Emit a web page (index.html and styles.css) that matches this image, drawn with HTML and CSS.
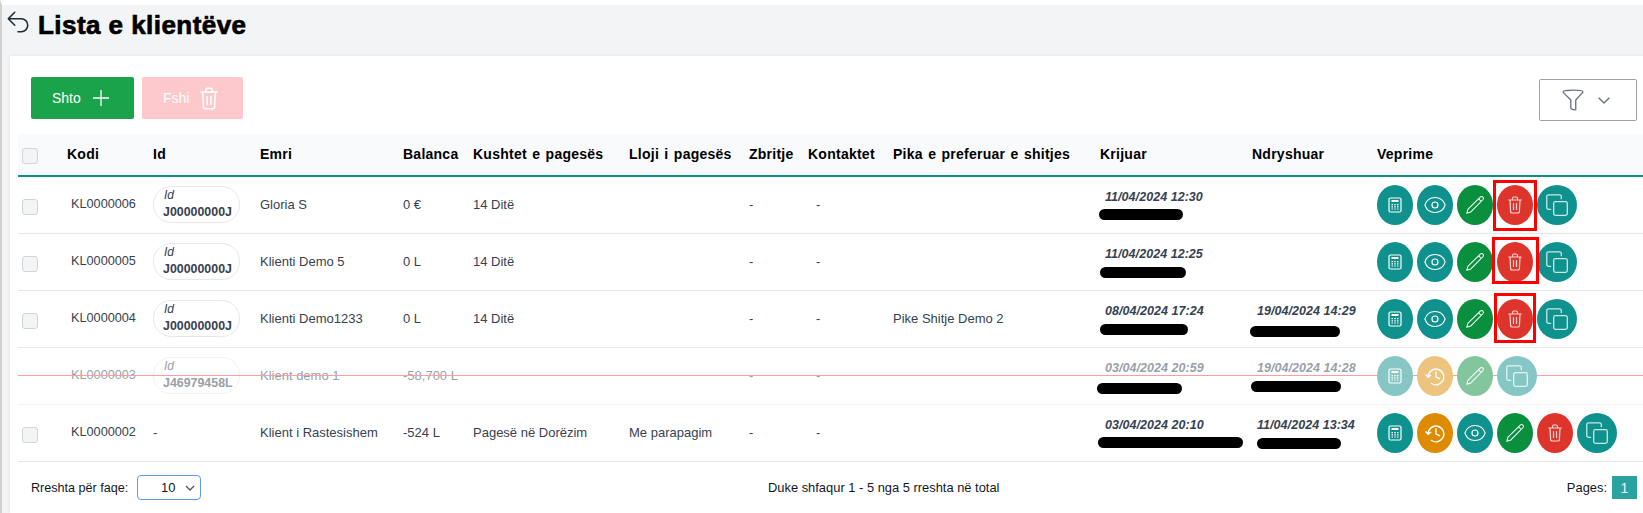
FILE: index.html
```html
<!DOCTYPE html>
<html lang="sq">
<head>
<meta charset="utf-8">
<title>Lista e klientëve</title>
<link rel="stylesheet" href="styles.css">
</head>
<body>
<svg class="defs" aria-hidden="true">
  <symbol id="i-calc" viewBox="0 0 14 16">
    <rect x="1" y="1" width="12" height="14" rx="1.5" fill="none" stroke="currentColor" stroke-width="1.2"/>
    <rect x="3.5" y="3" width="7" height="2" fill="currentColor"/>
    <path d="M3.5 7h1.5v1.2H3.5zM6.25 7h1.5v1.2h-1.5zM9 7h1.5v1.2H9zM3.5 9.2h1.5v1.2H3.5zM6.25 9.2h1.5v1.2h-1.5zM9 9.2h1.5v1.2H9zM3.5 11.4h1.5v1.2H3.5zM6.25 11.4h1.5v1.2h-1.5zM9 11.4h1.5v1.2H9z" fill="currentColor"/>
  </symbol>
  <symbol id="i-eye" viewBox="0 0 24 24">
    <path d="M2.036 12.322a1.012 1.012 0 0 1 0-.639C3.423 7.51 7.36 4.5 12 4.5c4.638 0 8.573 3.007 9.963 7.178.07.207.07.431 0 .639C20.577 16.49 16.64 19.5 12 19.5c-4.638 0-8.573-3.007-9.963-7.178Z" fill="none" stroke="currentColor" stroke-width="1.2"/>
    <circle cx="12" cy="12" r="3" fill="none" stroke="currentColor" stroke-width="1.2"/>
  </symbol>
  <symbol id="i-pencil" viewBox="0 0 24 24">
    <path d="M18 3.2a2 2 0 0 1 2.8 2.8L7.5 19.6 3 21l1.4-4.5Z M16 5.4l2.8 2.8" fill="none" stroke="currentColor" stroke-width="1.1" stroke-linejoin="round"/>
  </symbol>
  <symbol id="i-trash" viewBox="0 0 14 18">
    <path d="M.8 4h12.4M4.5 4V2.4A1.4 1.4 0 0 1 5.900 1h2.200a1.400 1.400 0 0 1 1.400 1.400V4M2 4l.6 11.600A1.500 1.500 0 0 0 4.100 17h5.800a1.500 1.500 0 0 0 1.500-1.400L12 4M5.500 7.500v6M8.500 7.500v6" fill="none" stroke="currentColor" stroke-width="1.200" stroke-linecap="round" stroke-linejoin="round"/>
  </symbol>
  <symbol id="i-copy" viewBox="0 0 22 22">
    <rect x="7.700" y="7.700" width="13.600" height="13.600" rx="1.800" fill="none" stroke="currentColor" stroke-width="1.300"/>
    <path d="M4.700 15.300H2.600A1.800 1.800 0 0 1 .8 13.500V2.600A1.800 1.800 0 0 1 2.600.8h10.900a1.800 1.800 0 0 1 1.800 1.800v2.100" fill="none" stroke="currentColor" stroke-width="1.300" stroke-linecap="round"/>
  </symbol>
  <symbol id="i-history" viewBox="0 0 24 24">
    <path d="M3.500 12.500a9 9 0 1 1 4 7.500M1 10l2.500 3 3-2.500M12.500 6.500v6l4 2" fill="none" stroke="currentColor" stroke-width="1.600" stroke-linecap="round" stroke-linejoin="round"/>
  </symbol>
</svg>

<header class="page-head">
  <svg class="back" viewBox="0 0 24 24"><path d="M9 15 3 9m0 0 6-6M3 9h12a6 6 0 0 1 0 12h-3" fill="none" stroke="currentColor" stroke-width="1.400" stroke-linecap="round" stroke-linejoin="round"/></svg>
  <h1 class="title">Lista e klientëve</h1>
</header>

<main class="card">
  <div class="toolbar">
    <div class="toolbar-left">
      <button class="btn btn-add">Shto
        <svg class="btn-plus" viewBox="0 0 16 16"><path d="M8 0v16M0 8h16" stroke="currentColor" stroke-width="1.300" fill="none"/></svg>
      </button>
      <button class="btn btn-del">Fshi
        <svg class="btn-trash"><use href="#i-trash"/></svg>
      </button>
    </div>
    <button class="filter">
      <svg class="filter-ico" viewBox="0 0 20 20"><path d="M1 2.500C1 1.500 5 1 10 1s9 .5 9 1.500c0 .6-.5 1-1 1.500l-5.500 6v8.300c0 .8-1 .8-1.500.7l-2-.8c-.5-.2-1-.5-1-1V10L2 4C1.500 3.500 1 3.100 1 2.500Z" fill="none" stroke="currentColor" stroke-width="1.200" stroke-linejoin="round"/></svg>
      <svg class="filter-chev" viewBox="0 0 12 7"><path d="M.7.7 6 6l5.300-5.300" fill="none" stroke="currentColor" stroke-width="1.300"/></svg>
    </button>
  </div>

  <div class="table-wrap">
    <table class="clients">
      <colgroup>
        <col class="c-check"><col class="c-kodi"><col class="c-id"><col class="c-emri"><col class="c-bal"><col class="c-kushte"><col class="c-lloji"><col class="c-zbr"><col class="c-kont"><col class="c-pika"><col class="c-kri"><col class="c-ndr"><col class="c-vep">
      </colgroup>
      <thead>
        <tr>
          <th class="cell-check"><span class="check"></span></th>
          <th>Kodi</th><th>Id</th><th>Emri</th><th>Balanca</th><th>Kushtet e pagesës</th><th>Lloji i pagesës</th><th>Zbritje</th><th>Kontaktet</th><th>Pika e preferuar e shitjes</th><th>Krijuar</th><th>Ndryshuar</th><th>Veprime</th>
        </tr>
      </thead>
      <tbody>
        <tr>
          <td class="cell-check"><span class="check"></span></td>
          <td class="cell-kodi">KL0000006</td>
          <td><div class="pill"><i>Id</i><b>J00000000J</b></div></td>
          <td>Gloria S</td><td>0 €</td><td>14 Ditë</td><td></td><td>-</td><td class="cell-kont">-</td><td></td>
          <td class="cell-date"><em>11/04/2024 12:30</em></td>
          <td class="cell-date"></td>
          <td class="cell-actions"><div class="actions">
            <span class="act teal"><svg class="ic-calc"><use href="#i-calc"/></svg></span>
            <span class="act teal"><svg class="ic-eye"><use href="#i-eye"/></svg></span>
            <span class="act green"><svg class="ic-pencil"><use href="#i-pencil"/></svg></span>
            <span class="act red"><svg class="ic-trash"><use href="#i-trash"/></svg></span>
            <span class="act act-wide teal"><svg class="ic-copy"><use href="#i-copy"/></svg></span>
          </div></td>
        </tr>
        <tr>
          <td class="cell-check"><span class="check"></span></td>
          <td class="cell-kodi">KL0000005</td>
          <td><div class="pill"><i>Id</i><b>J00000000J</b></div></td>
          <td>Klienti Demo 5</td><td>0 L</td><td>14 Ditë</td><td></td><td>-</td><td class="cell-kont">-</td><td></td>
          <td class="cell-date"><em>11/04/2024 12:25</em></td>
          <td class="cell-date"></td>
          <td class="cell-actions"><div class="actions">
            <span class="act teal"><svg class="ic-calc"><use href="#i-calc"/></svg></span>
            <span class="act teal"><svg class="ic-eye"><use href="#i-eye"/></svg></span>
            <span class="act green"><svg class="ic-pencil"><use href="#i-pencil"/></svg></span>
            <span class="act red"><svg class="ic-trash"><use href="#i-trash"/></svg></span>
            <span class="act act-wide teal"><svg class="ic-copy"><use href="#i-copy"/></svg></span>
          </div></td>
        </tr>
        <tr>
          <td class="cell-check"><span class="check"></span></td>
          <td class="cell-kodi">KL0000004</td>
          <td><div class="pill"><i>Id</i><b>J00000000J</b></div></td>
          <td>Klienti Demo1233</td><td>0 L</td><td>14 Ditë</td><td></td><td>-</td><td class="cell-kont">-</td><td>Pike Shitje Demo 2</td>
          <td class="cell-date"><em>08/04/2024 17:24</em></td>
          <td class="cell-date"><em>19/04/2024 14:29</em></td>
          <td class="cell-actions"><div class="actions">
            <span class="act teal"><svg class="ic-calc"><use href="#i-calc"/></svg></span>
            <span class="act teal"><svg class="ic-eye"><use href="#i-eye"/></svg></span>
            <span class="act green"><svg class="ic-pencil"><use href="#i-pencil"/></svg></span>
            <span class="act red"><svg class="ic-trash"><use href="#i-trash"/></svg></span>
            <span class="act act-wide teal"><svg class="ic-copy"><use href="#i-copy"/></svg></span>
          </div></td>
        </tr>
        <tr class="deleted">
          <td class="cell-check"><span class="strike"></span></td>
          <td class="cell-kodi">KL0000003</td>
          <td><div class="pill"><i>Id</i><b>J46979458L</b></div></td>
          <td>Klient demo 1</td><td>-58,700 L</td><td></td><td></td><td>-</td><td class="cell-kont">-</td><td></td>
          <td class="cell-date"><em>03/04/2024 20:59</em></td>
          <td class="cell-date"><em>19/04/2024 14:28</em></td>
          <td class="cell-actions"><div class="actions">
            <span class="act teal"><svg class="ic-calc"><use href="#i-calc"/></svg></span>
            <span class="act orange"><svg class="ic-history"><use href="#i-history"/></svg></span>
            <span class="act green"><svg class="ic-pencil"><use href="#i-pencil"/></svg></span>
            <span class="act act-wide teal"><svg class="ic-copy"><use href="#i-copy"/></svg></span>
          </div></td>
        </tr>
        <tr>
          <td class="cell-check"><span class="check"></span></td>
          <td class="cell-kodi">KL0000002</td>
          <td>-</td>
          <td>Klient i Rastesishem</td><td>-524 L</td><td>Pagesë në Dorëzim</td><td>Me parapagim</td><td>-</td><td class="cell-kont">-</td><td></td>
          <td class="cell-date"><em>03/04/2024 20:10</em></td>
          <td class="cell-date"><em>11/04/2024 13:34</em></td>
          <td class="cell-actions"><div class="actions">
            <span class="act teal"><svg class="ic-calc"><use href="#i-calc"/></svg></span>
            <span class="act orange"><svg class="ic-history"><use href="#i-history"/></svg></span>
            <span class="act teal"><svg class="ic-eye"><use href="#i-eye"/></svg></span>
            <span class="act green"><svg class="ic-pencil"><use href="#i-pencil"/></svg></span>
            <span class="act red"><svg class="ic-trash"><use href="#i-trash"/></svg></span>
            <span class="act act-wide teal"><svg class="ic-copy"><use href="#i-copy"/></svg></span>
          </div></td>
        </tr>
      </tbody>
    </table>

    <div class="marks">
      <span class="bar b1"></span><span class="bar b2"></span><span class="bar b3"></span><span class="bar b4"></span><span class="bar b5"></span><span class="bar b6"></span><span class="bar b7"></span><span class="bar b8"></span>
      <span class="box x1"></span><span class="box x2"></span><span class="box x3"></span>
    </div>
  </div>

  <footer class="foot">
    <div class="per-page">
      <span class="per-label">Rreshta për faqe:</span>
      <div class="select"><span>10</span>
        <svg class="select-chev" viewBox="0 0 10 6"><path d="M1 1l4 4 4-4" fill="none" stroke="currentColor" stroke-width="1.300"/></svg>
      </div>
    </div>
    <div class="summary">Duke shfaqur 1 - 5 nga 5 rreshta në total</div>
    <div class="pages"><span>Pages:</span><span class="page-chip">1</span></div>
  </footer>
</main>
</body>
</html>
```
FILE: styles.css
```css
* { box-sizing: border-box; }
html, body { margin: 0; height: 513px; overflow: hidden; }
body {
  background: #f3f4f6;
  border-top: 5px solid #fff;
  border-left: 2px solid #d1d1d1;
  font-family: "Liberation Sans", Arial, sans-serif;
  font-size: 13px;
  color: #374151;
  display: flex;
  flex-direction: column;
}
.defs { position: absolute; width: 0; height: 0; }

.page-head { height: 51px; display: flex; align-items: flex-start; padding-left: 3px; color: #1f2937; }
.back { width: 26px; height: 26px; margin-top: 4px; flex: none; }
.title {
  margin: 5px 0 0 7px;
  font-size: 26px;
  line-height: 30px;
  font-weight: 700;
  color: #000;
  letter-spacing: .45px;
  -webkit-text-stroke: 0.7px #000;
}

.card {
  flex: 1;
  margin-left: 8px;
  padding: 21px 0 0 8px;
  background: #fff;
  box-shadow: 0 0 3px rgba(0,0,0,.08);
  min-width: 0;
}

.toolbar { display: flex; justify-content: space-between; align-items: flex-start; padding: 0 6px 0 13px; height: 57px; }
.toolbar-left { display: flex; gap: 8px; }
.btn {
  height: 42px;
  border: 0;
  border-radius: 2px;
  color: #fff;
  font: 14px "Liberation Sans", Arial, sans-serif;
  display: flex;
  align-items: center;
  padding: 0 0 0 21px;
}
.btn-add { width: 103px; background: #1aa34a; gap: 12px; }
.btn-del { width: 101px; background: #fdc9cd; gap: 11px; }
.btn-plus { width: 16px; height: 16px; }
.btn-trash { width: 18px; height: 23px; }

.filter {
  margin-top: 2px;
  width: 98px;
  height: 42px;
  background: #fff;
  border: 1px solid #9ca3af;
  border-radius: 2px;
  color: #6b7280;
  display: flex;
  align-items: center;
  justify-content: center;
  gap: 14px;
  padding: 0 4px 0 0;
}
.filter-ico { width: 22px; height: 22px; }
.filter-chev { width: 12px; height: 7px; }

.table-wrap { position: relative; }
.clients { width: 1625px; table-layout: fixed; border-collapse: separate; border-spacing: 0; }
.c-check { width: 49px; } .c-kodi { width: 86px; } .c-id { width: 107px; } .c-emri { width: 143px; }
.c-bal { width: 70px; } .c-kushte { width: 156px; } .c-lloji { width: 120px; } .c-zbr { width: 59px; }
.c-kont { width: 85px; } .c-pika { width: 207px; } .c-kri { width: 152px; } .c-ndr { width: 125px; } .c-vep { width: 266px; }

.clients th {
  height: 43px;
  padding: 0 0 2px;
  background: #f9fafb;
  border-bottom: 2px solid #0f8f8a;
  font-size: 14px;
  font-weight: 700;
  color: #000;
  text-align: left;
  white-space: nowrap;
  letter-spacing: .25px;
  word-spacing: 1.2px;
}
.clients td {
  height: 57px;
  padding: 0 0 2px;
  border-bottom: 1px solid #e5e7eb;
  white-space: nowrap;
  vertical-align: middle;
}
.clients th.cell-check { padding: 2px 0 0 4px; }
.clients td.cell-check { padding: 4px 0 0 4px; }
.clients td.cell-kodi { padding-left: 4px; font-size: 12.7px; }
.clients td.cell-kont { padding-left: 8px; }
.clients td.cell-date { padding: 0 0 18px 5px; }
.clients td.cell-actions { padding: 0; }
.cell-date em { font-weight: 700; font-style: italic; font-size: 12.5px; letter-spacing: .05px; }

.check { display: block; width: 16px; height: 16px; background: #f3f4f6; border: 1px solid #d1d5db; border-radius: 3px; }

.pill {
  width: 87px;
  height: 37px;
  border: 1px solid #e5e7eb;
  border-radius: 18px;
  padding: 0 0 0 9px;
  display: flex;
  flex-direction: column;
  line-height: 16px;
}
.pill i { padding-left: 1px; font-size: 12px; }
.pill b { font-size: 12.4px; line-height: 18px; }

.actions { display: flex; gap: 4px; }
.act {
  width: 36px;
  height: 40px;
  border-radius: 50%;
  display: flex;
  align-items: center;
  justify-content: center;
  color: #fff;
  flex: none;
  position: relative;
}
.act-wide { width: 40px; color: #c8e8e6; }
.teal { background: #0f918e; }
.green { background: #0a8f3e; }
.red { background: #dd352c; color: #f9d6d3; }
.orange { background: #dd8b00; }
.ic-calc { width: 14px; height: 16px; }
.ic-eye { width: 24px; height: 24px; }
.ic-pencil { width: 22px; height: 22px; }
.ic-trash { width: 14px; height: 18px; }
.ic-copy { width: 22px; height: 22px; }
.ic-history { width: 21px; height: 21px; }

.deleted { opacity: .5; }
.deleted .cell-check { position: relative; }
.strike {
  position: absolute;
  left: 0;
  top: 27px;
  width: 1625px;
  height: 1px;
  background: #ef4444;
}

.marks { position: absolute; inset: 0; pointer-events: none; }
.bar { position: absolute; height: 11px; border-radius: 6px; background: #000; }
.b1 { left: 1081px; top: 75px; width: 84px; }
.b2 { left: 1082px; top: 133px; width: 86px; }
.b3 { left: 1082px; top: 190px; width: 88px; }
.b4 { left: 1232px; top: 192px; width: 90px; }
.b5 { left: 1079px; top: 249px; width: 85px; }
.b6 { left: 1233px; top: 247px; width: 90px; }
.b7 { left: 1080px; top: 303px; width: 145px; }
.b8 { left: 1239px; top: 304px; width: 84px; }
.box { position: absolute; border: 3px solid #f00; }
.x1 { left: 1475px; top: 46px; width: 44px; height: 51px; }
.x2 { left: 1474px; top: 103px; width: 47px; height: 47px; }
.x3 { left: 1476px; top: 159px; width: 42px; height: 50px; }

.foot { display: flex; align-items: center; height: 50px; padding: 1px 6px 0 13px; color: #111827; font-size: 12.9px; }
.per-page { display: flex; align-items: center; gap: 9px; width: 170px; flex: none; }
.per-label { white-space: nowrap; font-size: 12.6px; }
.select {
  width: 64px;
  height: 25px;
  border: 1px solid #5b9bf0;
  border-radius: 4px;
  display: flex;
  align-items: center;
  justify-content: flex-end;
  gap: 10px;
  padding-right: 5px;
  flex: none;
}
.select-chev { width: 10px; height: 6px; color: #4b5563; }
.summary { margin-left: 567px; white-space: nowrap; }
.pages { margin-left: auto; display: flex; align-items: center; gap: 5px; }
.page-chip {
  width: 25px;
  height: 23px;
  background: #2aa3a0;
  color: #e8f7f6;
  font-size: 14px;
  display: flex;
  align-items: center;
  justify-content: center;
}
```
